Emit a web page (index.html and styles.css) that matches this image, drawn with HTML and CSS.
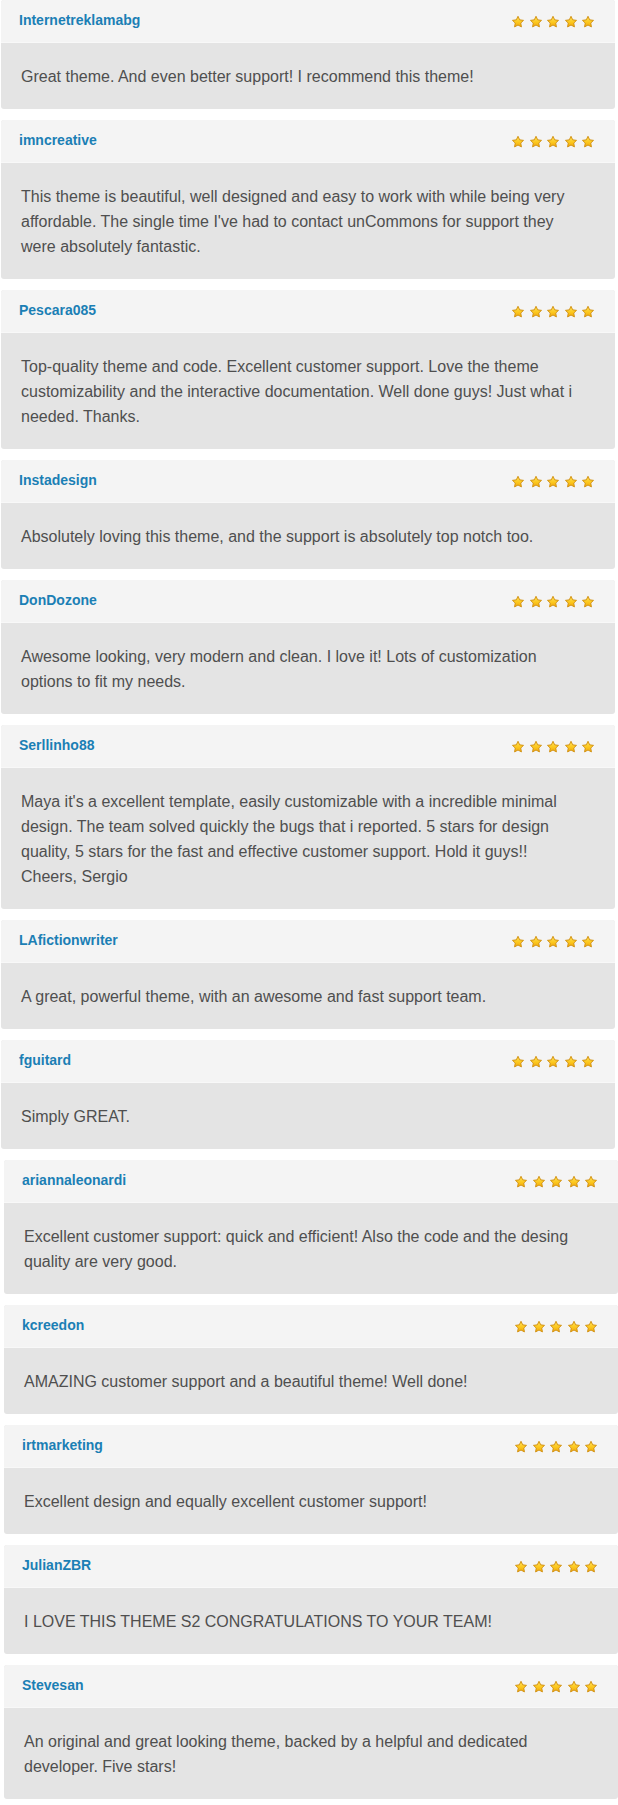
FILE: index.html
```html
<!DOCTYPE html>
<html lang="en">
<head>
<meta charset="utf-8">
<title>Reviews</title>
<link rel="stylesheet" href="styles.css">
</head>
<body>
<svg class="defs" aria-hidden="true">
  <defs>
    <linearGradient id="sg" x1="0" y1="0" x2="0" y2="1">
      <stop offset="0" stop-color="#ffe25a"/>
      <stop offset="0.55" stop-color="#fcc81f"/>
      <stop offset="1" stop-color="#f2a90c"/>
    </linearGradient>
    <symbol id="star" viewBox="0 0 24 24">
      <path d="M12 2.2l2.9 6.1 6.6.9-4.8 4.6 1.2 6.6L12 17.2l-5.9 3.2 1.2-6.6-4.8-4.6 6.6-.9z" fill="url(#sg)" stroke="#d08f12" stroke-width="1.6" stroke-linejoin="round"/>
    </symbol>
  </defs>
</svg>

<main class="reviews">

  <article class="review">
    <header class="review-head"><span class="author">Internetreklamabg</span><span class="stars"><svg><use href="#star"/></svg><svg><use href="#star"/></svg><svg><use href="#star"/></svg><svg><use href="#star"/></svg><svg><use href="#star"/></svg></span></header>
    <p class="review-body">Great theme. And even better support! I recommend this theme!</p>
  </article>

  <article class="review">
    <header class="review-head"><span class="author">imncreative</span><span class="stars"><svg><use href="#star"/></svg><svg><use href="#star"/></svg><svg><use href="#star"/></svg><svg><use href="#star"/></svg><svg><use href="#star"/></svg></span></header>
    <p class="review-body">This theme is beautiful, well designed and easy to work with while being very affordable. The single time I've had to contact unCommons for support they were absolutely fantastic.</p>
  </article>

  <article class="review">
    <header class="review-head"><span class="author">Pescara085</span><span class="stars"><svg><use href="#star"/></svg><svg><use href="#star"/></svg><svg><use href="#star"/></svg><svg><use href="#star"/></svg><svg><use href="#star"/></svg></span></header>
    <p class="review-body">Top-quality theme and code. Excellent customer support. Love the theme customizability and the interactive documentation. Well done guys! Just what i needed. Thanks.</p>
  </article>

  <article class="review">
    <header class="review-head"><span class="author">Instadesign</span><span class="stars"><svg><use href="#star"/></svg><svg><use href="#star"/></svg><svg><use href="#star"/></svg><svg><use href="#star"/></svg><svg><use href="#star"/></svg></span></header>
    <p class="review-body">Absolutely loving this theme, and the support is absolutely top notch too.</p>
  </article>

  <article class="review">
    <header class="review-head"><span class="author">DonDozone</span><span class="stars"><svg><use href="#star"/></svg><svg><use href="#star"/></svg><svg><use href="#star"/></svg><svg><use href="#star"/></svg><svg><use href="#star"/></svg></span></header>
    <p class="review-body">Awesome looking, very modern and clean. I love it! Lots of customization options to fit my needs.</p>
  </article>

  <article class="review">
    <header class="review-head"><span class="author">Serllinho88</span><span class="stars"><svg><use href="#star"/></svg><svg><use href="#star"/></svg><svg><use href="#star"/></svg><svg><use href="#star"/></svg><svg><use href="#star"/></svg></span></header>
    <p class="review-body">Maya it's a excellent template, easily customizable with a incredible minimal design. The team solved quickly the bugs that i reported. 5 stars for design quality, 5 stars for the fast and effective customer support. Hold it guys!! Cheers, Sergio</p>
  </article>

  <article class="review">
    <header class="review-head"><span class="author">LAfictionwriter</span><span class="stars"><svg><use href="#star"/></svg><svg><use href="#star"/></svg><svg><use href="#star"/></svg><svg><use href="#star"/></svg><svg><use href="#star"/></svg></span></header>
    <p class="review-body">A great, powerful theme, with an awesome and fast support team.</p>
  </article>

  <article class="review">
    <header class="review-head"><span class="author">fguitard</span><span class="stars"><svg><use href="#star"/></svg><svg><use href="#star"/></svg><svg><use href="#star"/></svg><svg><use href="#star"/></svg><svg><use href="#star"/></svg></span></header>
    <p class="review-body">Simply GREAT.</p>
  </article>

  <article class="review review--shift">
    <header class="review-head"><span class="author">ariannaleonardi</span><span class="stars"><svg><use href="#star"/></svg><svg><use href="#star"/></svg><svg><use href="#star"/></svg><svg><use href="#star"/></svg><svg><use href="#star"/></svg></span></header>
    <p class="review-body">Excellent customer support: quick and efficient! Also the code and the desing quality are very good.</p>
  </article>

  <article class="review review--shift">
    <header class="review-head"><span class="author">kcreedon</span><span class="stars"><svg><use href="#star"/></svg><svg><use href="#star"/></svg><svg><use href="#star"/></svg><svg><use href="#star"/></svg><svg><use href="#star"/></svg></span></header>
    <p class="review-body">AMAZING customer support and a beautiful theme! Well done!</p>
  </article>

  <article class="review review--shift">
    <header class="review-head"><span class="author">irtmarketing</span><span class="stars"><svg><use href="#star"/></svg><svg><use href="#star"/></svg><svg><use href="#star"/></svg><svg><use href="#star"/></svg><svg><use href="#star"/></svg></span></header>
    <p class="review-body">Excellent design and equally excellent customer support!</p>
  </article>

  <article class="review review--shift">
    <header class="review-head"><span class="author">JulianZBR</span><span class="stars"><svg><use href="#star"/></svg><svg><use href="#star"/></svg><svg><use href="#star"/></svg><svg><use href="#star"/></svg><svg><use href="#star"/></svg></span></header>
    <p class="review-body">I LOVE THIS THEME S2 CONGRATULATIONS TO YOUR TEAM!</p>
  </article>

  <article class="review review--shift">
    <header class="review-head"><span class="author">Stevesan</span><span class="stars"><svg><use href="#star"/></svg><svg><use href="#star"/></svg><svg><use href="#star"/></svg><svg><use href="#star"/></svg><svg><use href="#star"/></svg></span></header>
    <p class="review-body">An original and great looking theme, backed by a helpful and dedicated developer. Five stars!</p>
  </article>

</main>
</body>
</html>
```

FILE: styles.css
```css
html, body {
  margin: 0;
  padding: 0;
  background: #ffffff;
}

body {
  font-family: "Liberation Sans", Arial, Helvetica, sans-serif;
  color: #4f4f4f;
}

.defs {
  display: block;
  width: 0;
  height: 0;
  overflow: hidden;
}

.reviews {
  display: flex;
  flex-direction: column;
  gap: 11px;
  padding: 0 3px 12px 1px;
}

.review {
  border-radius: 3px;
  overflow: hidden;
  background: #e4e4e4;
}

.review--shift {
  margin-left: 3px;
  margin-right: -3px;
}

.review-head {
  display: flex;
  align-items: center;
  justify-content: space-between;
  height: 43px;
  padding: 0 20px 0 18px;
  background: #f4f4f4;
  border-bottom: 1px solid #f8f8f8;
  box-sizing: border-box;
}

.author {
  font-size: 14px;
  font-weight: bold;
  color: #1b7fb5;
  line-height: 1;
  margin-top: -2px;
}

.stars {
  display: flex;
  gap: 3.5px;
  margin-top: 1px;
}

.stars svg {
  width: 14px;
  height: 14px;
  display: block;
}

.review-body {
  margin: 0;
  padding: 21px 40px 20px 20px;
  font-size: 16px;
  line-height: 25px;
  color: #4f4f4f;
}
```
